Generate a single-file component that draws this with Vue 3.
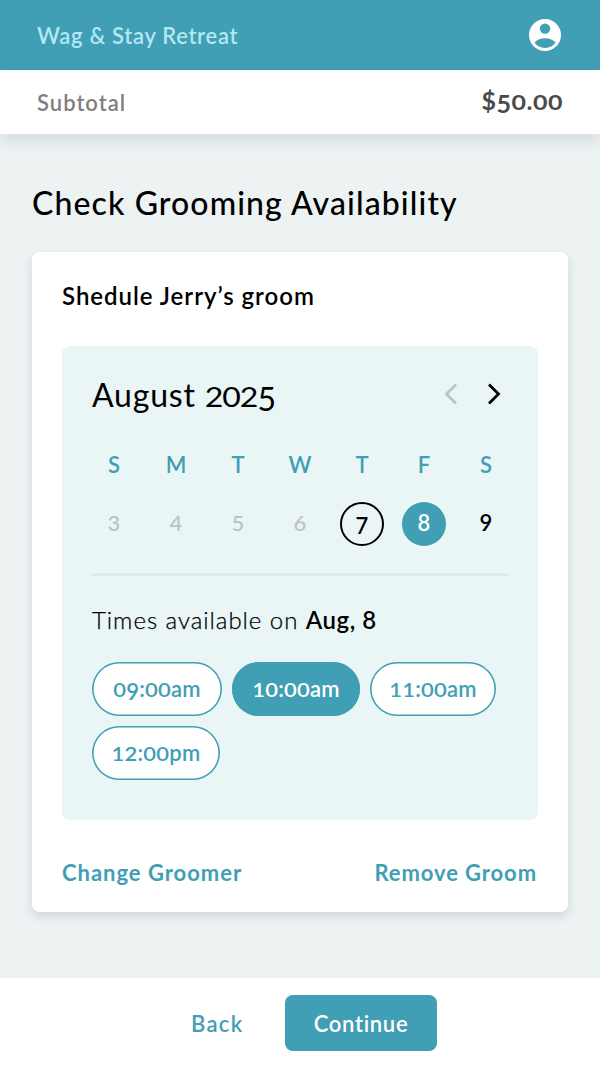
<script setup>
import { h, ref } from 'vue'

const weekdays = ['S', 'M', 'T', 'W', 'T', 'F', 'S']
const days = [
  { n: 3, state: 'past' },
  { n: 4, state: 'past' },
  { n: 5, state: 'past' },
  { n: 6, state: 'past' },
  { n: 7, state: 'today' },
  { n: 8, state: 'selected' },
  { n: 9, state: '' },
]
const slots = [
  { time: '09:00am', width: 130 },
  { time: '10:00am', width: 128 },
  { time: '11:00am', width: 126 },
  { time: '12:00pm', width: 128 },
]
const chosen = ref('10:00am')

// Old-style figures: 0-2 sit low, 3-5, 7 and 9 hang below the baseline.
const Figures = (props) =>
  h('span', { class: 'figures' }, [...props.text].map((c) => {
    if ('012'.includes(c)) return h('span', { class: 'fig-low' }, c)
    if ('34579'.includes(c)) return h('span', { class: 'fig-drop' }, c)
    return c
  }))
Figures.props = ['text']
</script>

<template>
  <div class="app">
    <header class="topbar">
      <span class="brand">Wag &amp; Stay Retreat</span>
      <svg class="avatar" viewBox="0 0 32 32">
        <circle cx="16" cy="16" r="16" fill="#fff" />
        <circle cx="16" cy="9.6" r="5.2" fill="#409eb5" />
        <path d="M5.400 23.600C8 20.700 11.800 19.200 16 19.200s8 1.500 10.600 4.400C24.300 27 20.400 29 16 29S7.700 27 5.400 23.600Z" fill="#409eb5" />
      </svg>
    </header>
    <div class="subtotal">
      <span class="label">Subtotal</span>
      <span class="price"><Figures text="$50.00" /></span>
    </div>

    <main>
      <h1>Check Grooming Availability</h1>
      <section class="card">
        <h2>Shedule Jerry’s groom</h2>
        <div class="calendar">
          <div class="month">
            <span class="month-name">August <Figures class="year" text="2025" /></span>
            <span class="arrows">
              <svg width="16" height="24" viewBox="0 0 16 24"><path d="M13 2.500 3.500 12 13 21.500" fill="none" stroke="#bcc5c5" stroke-width="2.800" /></svg>
              <svg width="16" height="24" viewBox="0 0 16 24"><path d="M3 2.500 12.500 12 3 21.500" fill="none" stroke="#000" stroke-width="2.800" /></svg>
            </span>
          </div>
          <div class="week names">
            <span v-for="(d, i) in weekdays" :key="i">{{ d }}</span>
          </div>
          <div class="week dates">
            <span v-for="d in days" :key="d.n" class="day" :class="d.state"><b>{{ d.n }}</b></span>
          </div>
          <hr />
          <p class="times">Times available on <strong>Aug, 8</strong></p>
          <div class="slots">
            <button
              v-for="s in slots"
              :key="s.time"
              class="slot"
              :class="{ on: s.time === chosen }"
              :style="{ width: s.width + 'px' }"
              @click="chosen = s.time"
            ><Figures :text="s.time" /></button>
          </div>
        </div>
        <div class="links">
          <a class="change">Change Groomer</a>
          <a class="remove">Remove Groom</a>
        </div>
      </section>
    </main>

    <footer>
      <a class="back">Back</a>
      <button class="continue">Continue</button>
    </footer>
  </div>
</template>

<style>
body { margin: 0; }
.figures { white-space: nowrap; }
.fig-low, .fig-drop { display: inline-block; line-height: 1; }
.fig-low { transform: scaleY(0.85); transform-origin: 50% 88.7%; }
.fig-drop { transform: translateY(0.13em); }
</style>

<style scoped>
* { box-sizing: border-box; }
.app {
  width: 600px;
  height: 1068px;
  display: flex;
  flex-direction: column;
  background: #edf2f3;
  font-family: Lato, "Open Sans", sans-serif;
  font-size: 22px;
  font-weight: 500;
  color: #000;
}
.topbar {
  flex: none;
  height: 70px;
  padding: 0 39px 0 37px;
  display: flex;
  align-items: center;
  justify-content: space-between;
  background: #409eb5;
}
.brand { color: #b3e7f1; font-weight: 600; letter-spacing: 0.68px; }
.avatar { width: 32px; height: 32px; }
.subtotal {
  flex: none;
  height: 64px;
  padding: 0 37px;
  display: flex;
  align-items: center;
  justify-content: space-between;
  background: #fff;
  box-shadow: 0 6px 14px rgba(60, 85, 100, 0.15);
}
.label { color: #7f7f7f; font-weight: 600; letter-spacing: 1px; }
.price { color: #4a4a4a; font-size: 25px; font-weight: 700; letter-spacing: 0.5px; margin-top: -4px; }
main { flex: 1; padding: 49px 32px 0; }
h1 {
  margin: 0;
  font-size: 32px;
  font-weight: 500;
  line-height: 40px;
  letter-spacing: 1.1px;
}
.card {
  height: 660px;
  margin-top: 29px;
  padding: 30px 30px 0;
  border-radius: 8px;
  background: #fff;
  box-shadow: 0 5px 10px rgba(60, 85, 100, 0.16);
}
h2 {
  margin: 0;
  font-size: 24px;
  font-weight: 600;
  line-height: 28px;
  letter-spacing: 0.98px;
}
.calendar {
  height: 474px;
  margin-top: 36px;
  padding: 28px 30px 0;
  border-radius: 8px;
  background: #eaf6f6;
}
.month { height: 40px; display: flex; align-items: center; justify-content: space-between; }
.month-name { font-size: 32px; font-weight: 400; letter-spacing: 0.8px; }
.year { letter-spacing: -1px; }
.arrows { display: flex; gap: 27px; padding-right: 6px; }
.arrows svg { display: block; }
.week { width: 434px; margin-left: -9px; display: grid; grid-template-columns: repeat(7, 62px); justify-items: center; }
.names { height: 28px; margin-top: 37px; line-height: 28px; color: #409eb5; font-weight: 600; }
.dates { margin-top: 23px; }
.day {
  width: 44px;
  height: 44px;
  display: flex;
  align-items: center;
  justify-content: center;
  border-radius: 50%;
}
.day b { font-weight: 600; margin-top: -3px; }
.past { color: #b9c3c4; }
.past b { font-weight: 500; }
.today { border: 2px solid #000; }
.today b { margin-top: 2px; }
.selected { background: #409eb5; color: #fff; }
hr { height: 3px; margin: 27px 0 0; border: 0; background: #dfe9ea; }
.times {
  margin: 29px 0 0;
  font-size: 24px;
  font-weight: 300;
  line-height: 30px;
  letter-spacing: 0.96px;
  -webkit-text-stroke: 0.25px #000;
}
.times strong { font-weight: 600; letter-spacing: 0.55px; -webkit-text-stroke: 0; }
.slots { display: flex; flex-wrap: wrap; gap: 10px; margin-top: 27px; }
.slot {
  height: 54px;
  padding: 0 0 2px;
  border: 0;
  box-shadow: inset 0 0 0 1.6px #409eb5;
  border-radius: 27px;
  background: #fff;
  color: #409eb5;
  font: 600 22px Lato, "Open Sans", sans-serif;
  letter-spacing: 0.2px;
}
.slot.on { background: #409eb5; color: #fff; }
.links { display: flex; justify-content: space-between; padding-right: 1px; margin-top: 39px; line-height: 28px; color: #409eb5; font-weight: 700; }
.change { letter-spacing: 0.98px; }
.remove { letter-spacing: 0.9px; }
footer {
  flex: none;
  height: 90px;
  padding: 17px 0 0 191px;
  display: flex;
  align-items: flex-start;
  background: #fff;
}
.back { width: 94px; line-height: 57px; color: #409eb5; font-weight: 600; letter-spacing: 1.3px; }
.continue {
  width: 152px;
  height: 56px;
  padding: 0;
  border: 0;
  border-radius: 8px;
  background: #409eb5;
  color: #fff;
  font: 600 22px Lato, "Open Sans", sans-serif;
  letter-spacing: 0.7px;
}
</style>
